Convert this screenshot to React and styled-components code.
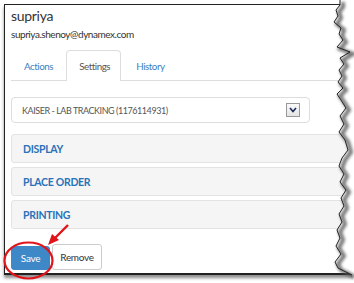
import React from "react";
import styled, { createGlobalStyle } from "styled-components";

const Global = createGlobalStyle`
  html, body { margin: 0; padding: 0; background: #fff; }
  body { font-family: Lato, "Open Sans", Arial, sans-serif; }
`;

const Page = styled.div`
  position: relative;
  width: 354px;
  height: 283px;
  overflow: hidden;
  background: #fff;
`;

const Frame = styled.div`
  margin: 4px 0 0 4px;
  width: 350px;
  height: 268px;
  border-top: 1.5px solid #222;
  border-left: 1.5px solid #222;
  border-bottom: 2px solid #222;
  box-shadow: 0 3px 3px rgba(0, 0, 0, 0.45);
  box-sizing: content-box;
  overflow: hidden;
  padding: 0 0 0 6px;
`;

const Name = styled.div`
  font-size: 14px;
  color: #333;
  line-height: 16px;
  margin-top: 3px;
  letter-spacing: -0.3px;
`;

const Email = styled.div`
  font-size: 10px;
  color: #333;
  line-height: 14px;
  margin-top: 3px;
  letter-spacing: -0.45px;
`;

const TabBar = styled.div`
  display: flex;
  margin-top: 9px;
  height: 30px;
  border-bottom: 1px solid #ddd;
`;

const Tab = styled.div`
  box-sizing: border-box;
  padding: 0 10px 0 12px;
  display: flex;
  align-items: center;
  font-size: 9.8px;
  letter-spacing: -0.45px;
  color: ${(p) => (p.$active ? "#555" : "#3b7fc4")};
  background: #fff;
  border: 1px solid ${(p) => (p.$active ? "#ddd" : "transparent")};
  border-bottom: none;
  border-radius: 4px 4px 0 0;
  margin-bottom: ${(p) => (p.$active ? "-1px" : "0")};
  height: ${(p) => (p.$active ? "31px" : "30px")};
  margin-right: 2px;
`;

const SelectBox = styled.div`
  margin-top: 16px;
  width: 299px;
  height: 26px;
  box-sizing: border-box;
  border: 1px solid #ddd;
  border-radius: 4px;
  display: flex;
  align-items: center;
  justify-content: space-between;
  padding: 0 9px 0 10px;
  font-size: 9px;
  letter-spacing: -0.45px;
  color: #555;
  text-transform: uppercase;
`;

const Arrow = styled.div`
  width: 14px;
  height: 14px;
  box-sizing: border-box;
  border: 1px solid #999;
  background: linear-gradient(#fafafa, #e4e4e4);
  display: flex;
  align-items: center;
  justify-content: center;
`;

const Panels = styled.div`
  margin-top: 11px;
  display: flex;
  flex-direction: column;
  gap: 4px;
`;

const Panel = styled.div`
  height: 29px;
  box-sizing: border-box;
  background: #f5f5f5;
  border: 1px solid #e3e3e3;
  border-radius: 3px;
  display: flex;
  align-items: center;
  padding-left: 11px;
  font-size: 10.5px;
  letter-spacing: -0.3px;
  font-weight: 700;
  color: #2a72b8;
  width: 340px;
`;

const Buttons = styled.div`
  margin-top: 15px;
  display: flex;
  align-items: flex-end;
  gap: 2px;
`;

const Button = styled.div`
  height: ${(p) => (p.$primary ? "24px" : "26px")};
  box-sizing: border-box;
  display: flex;
  align-items: center;
  justify-content: center;
  font-size: 10px;
  letter-spacing: -0.3px;
  border-radius: 3px;
  color: ${(p) => (p.$primary ? "#fff" : "#333")};
  background: ${(p) => (p.$primary ? "#3f88c8" : "#fff")};
  border: 1px solid ${(p) => (p.$primary ? "#3f88c8" : "#ccc")};
  width: ${(p) => (p.$primary ? "39px" : "50px")};
`;

const Overlay = styled.svg`
  position: absolute;
  left: 0;
  top: 0;
  pointer-events: none;
`;

const jag = [
  [340, 0], [340, 5], [336, 10], [338, 16], [334, 22], [341, 28], [339, 34], [343, 40],
  [337, 47], [350, 52], [340, 58], [344, 64], [339, 70], [342, 76], [338, 82],
  [343, 88], [337, 94], [341, 100], [346, 108], [340, 116], [344, 124], [339, 132],
  [345, 140], [348, 150], [342, 158], [339, 166], [344, 174], [340, 182], [346, 190],
  [341, 198], [344, 206], [339, 214], [342, 222], [337, 230], [340, 238], [336, 246],
  [341, 254], [335, 262], [338, 268], [352, 275],
];

const jagPath = jag.map((p, i) => `${i ? "L" : "M"}${p[0]} ${p[1]}`).join(" ");

function Tear() {
  return (
    <Overlay width="354" height="283" viewBox="0 0 354 283">
      <defs>
        <filter id="blur" x="-50%" y="-10%" width="200%" height="120%">
          <feGaussianBlur stdDeviation="1.6" />
        </filter>
      </defs>
      <path d={`${jagPath} L354 283 L354 0 Z`} fill="#fff" />
      <path
        d={jagPath}
        transform="translate(3 2)"
        fill="none"
        stroke="#555"
        strokeWidth="4"
        filter="url(#blur)"
        opacity="0.8"
      />
      <path d={jagPath} fill="none" stroke="#222" strokeWidth="1" />
    </Overlay>
  );
}

function Callout() {
  return (
    <Overlay width="354" height="283" viewBox="0 0 354 283">
      <ellipse cx="28.5" cy="260.5" rx="24" ry="18" fill="none" stroke="#e0141b" strokeWidth="2.2" />
      <line x1="68" y1="225" x2="54" y2="239" stroke="#e0141b" strokeWidth="2.4" />
      <polygon points="48,245 52,234 59,240" fill="#e0141b" />
    </Overlay>
  );
}

export default function App() {
  return (
    <Page>
      <Global />
      <Frame>
        <Name>supriya</Name>
        <Email>supriya.shenoy@dynamex.com</Email>
        <TabBar>
          <Tab>Actions</Tab>
          <Tab $active>Settings</Tab>
          <Tab>History</Tab>
        </TabBar>
        <SelectBox>
          <span>Kaiser - Lab Tracking (1176114931)</span>
          <Arrow>
            <svg width="8" height="6" viewBox="0 0 8 6">
              <path d="M1 1 L4 4.5 L7 1" fill="none" stroke="#1a2a5a" strokeWidth="1.6" />
            </svg>
          </Arrow>
        </SelectBox>
        <Panels>
          <Panel>DISPLAY</Panel>
          <Panel>PLACE ORDER</Panel>
          <Panel>PRINTING</Panel>
        </Panels>
        <Buttons>
          <Button $primary>Save</Button>
          <Button>Remove</Button>
        </Buttons>
      </Frame>
      <Tear />
      <Callout />
    </Page>
  );
}
